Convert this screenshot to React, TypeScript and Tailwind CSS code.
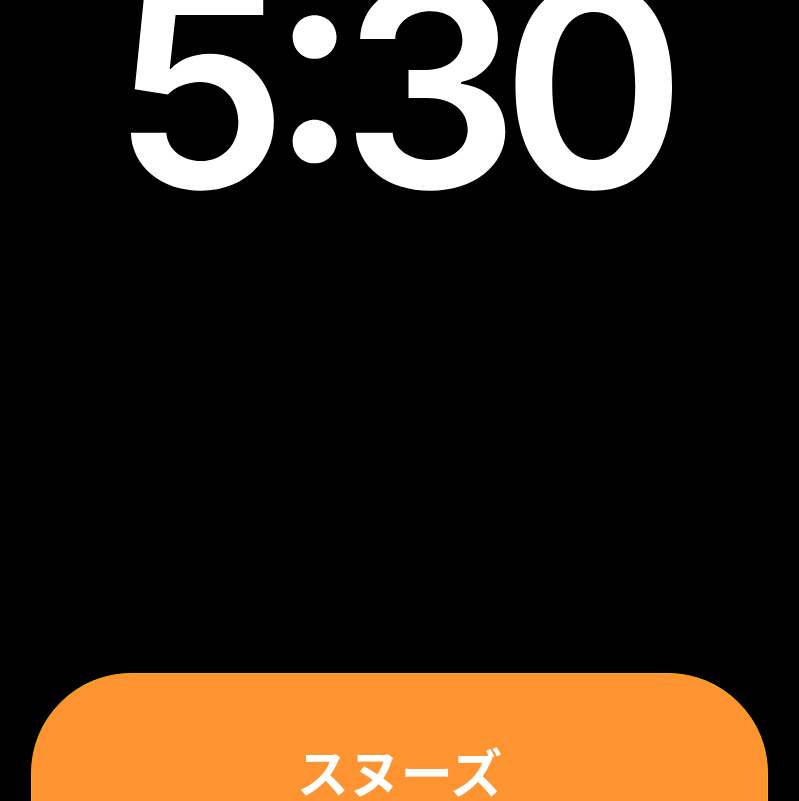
export default function App() {
  return (
    <div className="w-full h-[801px] bg-black overflow-hidden flex flex-col items-center">
      <div
        className="text-white text-[280px] leading-none font-semibold mt-[-53px] tracking-[-18px] pr-[19px]"
        style={{ fontFamily: "Inter, 'Liberation Sans', sans-serif" }}
      >
        5<span className="inline-block -translate-y-[27px]">:</span>30
      </div>
      <div className="mt-auto mb-[-102px] w-full px-[31px]">
        <button className="w-full h-[230px] rounded-[100px] bg-[#fe9431] border border-[#f6b000] flex justify-center items-start pt-[71px]">
          <span
            className="text-white text-[52px] leading-none font-bold"
            style={{ fontFamily: "'Noto Sans CJK JP', sans-serif" }}
          >
            スヌーズ
          </span>
        </button>
      </div>
    </div>
  );
}
